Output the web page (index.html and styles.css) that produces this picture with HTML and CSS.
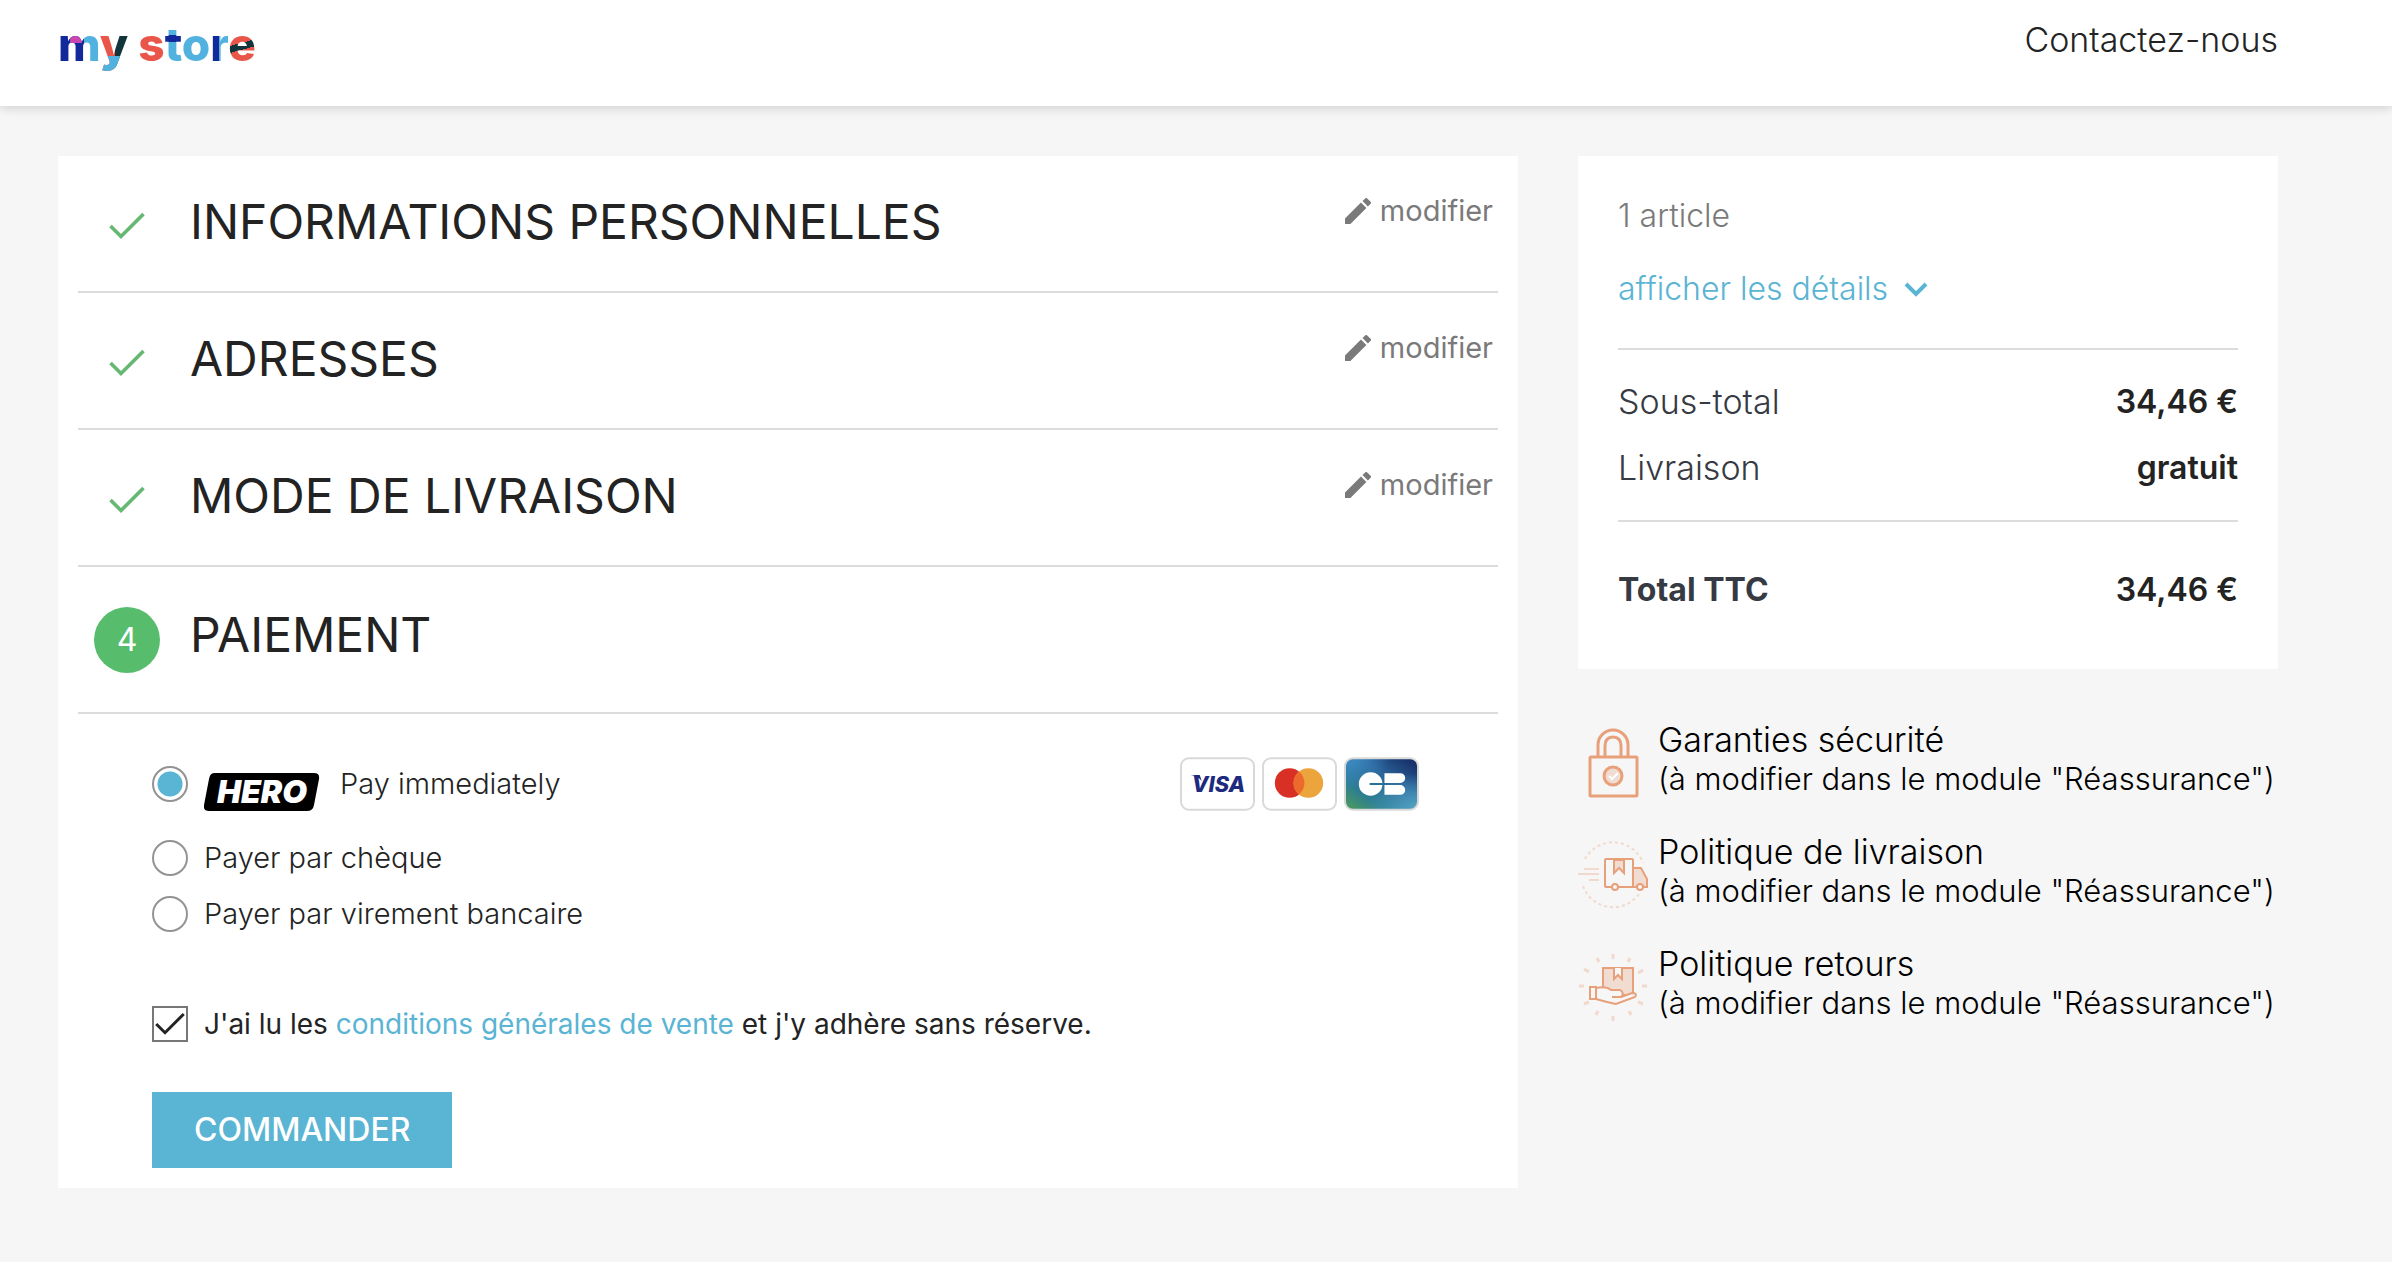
FILE: index.html
```html
<!DOCTYPE html>
<html lang="fr">
<head>
<meta charset="utf-8">
<meta name="viewport" content="width=device-width, initial-scale=1">
<title>Commande - my store</title>
<link rel="stylesheet" href="styles.css">
</head>
<body>
<svg class="sprite" aria-hidden="true">
  <symbol id="check" viewBox="0 0 36 28"><path d="M1.500 14 12 24.500 34.500 2" fill="none" stroke="currentColor" stroke-width="3.600"/></symbol>
  <symbol id="pencil" viewBox="3 3 18 18"><path d="M3 17.250V21h3.750L17.810 9.940l-3.750-3.750L3 17.250zM20.710 7.040a1 1 0 0 0 0-1.410l-2.340-2.340a1 1 0 0 0-1.410 0l-1.830 1.830 3.750 3.750 1.830-1.830z" fill="currentColor"/></symbol>
</svg>

<header class="header">
  <a class="logo" href="#" aria-label="my store"><span class="logo-m">m</span><span class="logo-y">y</span> <span class="logo-s">s</span><span class="logo-t">t</span><span class="logo-o">o</span><span class="logo-r">r</span><span class="logo-e">e</span></a>
  <a class="contact" href="#">Contactez-nous</a>
</header>

<main class="checkout">
  <div class="card steps">
    <section class="step">
      <span class="step-mark done"><svg width="36" height="28"><use href="#check"/></svg></span>
      <h1>INFORMATIONS PERSONNELLES</h1>
      <a class="edit" href="#"><svg width="26" height="26"><use href="#pencil"/></svg>modifier</a>
    </section>
    <section class="step">
      <span class="step-mark done"><svg width="36" height="28"><use href="#check"/></svg></span>
      <h1>ADRESSES</h1>
      <a class="edit" href="#"><svg width="26" height="26"><use href="#pencil"/></svg>modifier</a>
    </section>
    <section class="step">
      <span class="step-mark done"><svg width="36" height="28"><use href="#check"/></svg></span>
      <h1>MODE DE LIVRAISON</h1>
      <a class="edit" href="#"><svg width="26" height="26"><use href="#pencil"/></svg>modifier</a>
    </section>
    <section class="step current">
      <span class="step-mark number">4</span>
      <h1>PAIEMENT</h1>
    </section>

    <form class="payment">
      <div class="option featured">
        <input type="radio" name="payment" id="pay-hero" checked>
        <label for="pay-hero">
          <svg class="hero" width="116" height="38" viewBox="0 0 116 38" role="img" aria-label="Hero">
            <path d="M10 0H110Q116 0 115 6L110 32Q109 38 103 38H5Q-1 38 0 32L5 6Q6 0 10 0z"/>
            <text x="58" y="30" text-anchor="middle">HERO</text>
          </svg>
          Pay immediately
        </label>
        <div class="brands">
          <svg width="75" height="54" viewBox="0 0 76 54" role="img" aria-label="Visa">
            <rect class="brand-frame" x="1" y="1" width="74" height="52" rx="8"/>
            <path d="M11 18h9l2 6q-4-5-11-6z" fill="#1d2a80"/>
            <text class="visa" x="39" y="35" text-anchor="middle">VISA</text>
          </svg>
          <svg width="75" height="54" viewBox="0 0 76 54" role="img" aria-label="Mastercard">
            <rect class="brand-frame" x="1" y="1" width="74" height="52" rx="8"/>
            <circle cx="28" cy="26" r="15" fill="#d93025"/>
            <circle cx="47" cy="26" r="15" fill="#eca43c"/>
            <path d="M37.500 14.400a15 15 0 0 1 0 23.200 15 15 0 0 1 0-23.200z" fill="#ec6a2c"/>
          </svg>
          <svg width="75" height="54" viewBox="0 0 76 54" role="img" aria-label="Carte bancaire">
            <defs>
              <linearGradient id="cb-base" x1="0" y1="1" x2="1" y2="0"><stop offset="0" stop-color="#4f9d57"/><stop offset=".28" stop-color="#2c7d92"/><stop offset=".62" stop-color="#2a6298"/><stop offset="1" stop-color="#13255f"/></linearGradient>
              <radialGradient id="cb-left" cx="0" cy="0" r=".6"><stop offset="0" stop-color="#3f8fc9"/><stop offset="1" stop-color="#3f8fc9" stop-opacity="0"/></radialGradient>
              <radialGradient id="cb-right" cx="1" cy="1" r=".7"><stop offset="0" stop-color="#55a6c6"/><stop offset="1" stop-color="#55a6c6" stop-opacity="0"/></radialGradient>
            </defs>
            <rect x="1" y="1" width="74" height="52" rx="8" fill="url(#cb-base)"/>
            <rect x="1" y="1" width="74" height="52" rx="8" fill="url(#cb-left)"/>
            <rect class="brand-frame clear" x="1" y="1" width="74" height="52" rx="8"/>
            <circle cx="27" cy="27" r="12" fill="#fff"/>
            <path d="M26 27h14" stroke="#2a6f95" stroke-width="2"/>
            <path d="M41 16h16a5 5 0 0 1 0 10H41zM41 28h16a5 5 0 0 1 0 10H41z" fill="#fff"/>
          </svg>
        </div>
      </div>
      <div class="option">
        <input type="radio" name="payment" id="pay-cheque">
        <label for="pay-cheque">Payer par chèque</label>
      </div>
      <div class="option">
        <input type="radio" name="payment" id="pay-wire">
        <label for="pay-wire">Payer par virement bancaire</label>
      </div>
      <div class="terms">
        <span class="tick"><input type="checkbox" id="terms" checked><svg width="30" height="24"><use href="#check"/></svg></span>
        <label for="terms">J'ai lu les <a href="#">conditions générales de vente</a> et j'y adhère sans réserve.</label>
      </div>
      <button class="order" type="submit">COMMANDER</button>
    </form>
  </div>

  <aside class="sidebar">
    <section class="card summary">
      <p class="count">1 article</p>
      <a class="details" href="#">afficher les détails
        <svg width="24" height="16" viewBox="0 0 24 16"><path d="M2 3 12 13 22 3" fill="none" stroke="currentColor" stroke-width="4"/></svg>
      </a>
      <dl class="totals">
        <div><dt>Sous-total</dt><dd>34,46 €</dd></div>
        <div><dt>Livraison</dt><dd>gratuit</dd></div>
      </dl>
      <dl class="totals grand">
        <div><dt>Total TTC</dt><dd>34,46 €</dd></div>
      </dl>
    </section>

    <ul class="reassurance">
      <li>
        <svg width="70" height="70" viewBox="0 0 70 70" fill="none" stroke="#e8a07b" stroke-width="3">
          <rect x="12" y="29" width="47" height="39" rx="1"/>
          <path d="M20 28V17a15 15 0 0 1 30 0v11M27 28V18q0-9 8-9t8 9v10"/>
          <circle cx="35" cy="48" r="9" fill="#f1dcd1"/>
          <path d="m31 48 3 3 6-6" stroke="#fff" stroke-width="2"/>
        </svg>
        <div><h2>Garanties sécurité</h2><p>(à modifier dans le module "Réassurance")</p></div>
      </li>
      <li>
        <svg width="70" height="70" viewBox="0 0 70 70" fill="none" stroke="#e8a07b" stroke-width="2">
          <path d="M7 19a32 32 0 0 1 58 4M5 46a32 32 0 0 0 56 8" stroke="#f1d9cd" stroke-dasharray="3 3"/>
          <path d="M6 29h15M0 34h21M11 40h10" stroke="#f1d9cd"/>
          <path d="M55 28h8l6 11v8H55z" fill="#f1dcd1"/>
          <path d="M36 20v13l5-5 5 5V20z" fill="#f1dcd1"/>
          <rect x="27" y="19" width="28" height="28" rx="1"/>
          <circle cx="37" cy="47" r="3" fill="#f6f6f6"/><circle cx="62" cy="47" r="3" fill="#f6f6f6"/>
        </svg>
        <div><h2>Politique de livraison</h2><p>(à modifier dans le module "Réassurance")</p></div>
      </li>
      <li>
        <svg width="70" height="70" viewBox="0 0 70 70" fill="none" stroke="#e8a07b" stroke-width="2">
          <path d="M35 2v5M35 64v5M1 34h5M64 34h5M19 6l2 4M52 6l-2 4M6 17l5 3M65 18l-5 3M6 52l5-2M65 52l-5-2M18 63l2-4M53 63l-2-4" stroke="#f1d9cd" stroke-width="3"/>
          <path d="M25 16h30v27H25z" fill="#f1dcd1"/>
          <path d="M36 16v11l4-4 4 4V16" fill="#f6f6f6"/>
          <path d="M18 36q10-2 15 2h9q5 3 1 7l11-4q6 0 3 4L38 52q-10-2-20-5z" fill="#f6f6f6"/>
          <path d="M34 45h9"/><path d="M12 35h6v12h-6z"/>
        </svg>
        <div><h2>Politique retours</h2><p>(à modifier dans le module "Réassurance")</p></div>
      </li>
    </ul>
  </aside>
</main>
</body>
</html>
```
FILE: styles.css
```css
* { box-sizing: border-box; margin: 0; padding: 0; }

body {
  background: #fff;
  color: #232323;
  font-family: Inter, "Liberation Sans", sans-serif;
  font-size: 29px;
  font-weight: 300;
  line-height: 40px;
}

a { color: inherit; text-decoration: none; }
ul { list-style: none; }
svg { flex: none; }
.sprite { display: none; }

/* Header */
.header {
  position: relative;
  display: flex;
  justify-content: space-between;
  align-items: flex-start;
  height: 106px;
  padding: 20px 114px 0 58px;
  background: #fff;
  box-shadow: 0 2px 10px rgba(0, 0, 0, .16);
}
.logo { font-size: 46px; font-weight: 800; line-height: 48px; }
.logo span { color: transparent; -webkit-background-clip: text; background-clip: text; }
.logo .logo-m { background-image: linear-gradient(90deg, transparent 28%, #c846ae 28% 56%, transparent 56%), linear-gradient(90deg, #11299a 62%, #51b1df 62%); background-size: 100% 27px, 100% 100%; background-repeat: no-repeat; }
.logo .logo-y { background-image: linear-gradient(180deg, transparent 72%, #51b1df 72%), linear-gradient(90deg, #ea5549 55%, #12343b 55%); }
.logo .logo-s { background-image: linear-gradient(#ea5549, #ea5549); }
.logo .logo-t { background-image: linear-gradient(180deg, #51b1df 34%, #11299a 34% 46%, #51b1df 46%); }
.logo .logo-o { background-image: linear-gradient(#51b1df, #51b1df); }
.logo .logo-r { background-image: linear-gradient(90deg, #11299a 48%, #51b1df 48%); }
.logo .logo-e { background-image: linear-gradient(165deg, #ea5549 48%, #12343b 48% 59%, #ea5549 59%); }
.contact { font-size: 34px; }

/* Page grid */
.checkout {
  display: grid;
  grid-template-columns: 1460fr 700fr;
  gap: 60px;
  align-items: start;
  padding: 50px 114px 74px 58px;
  background: #f6f6f6;
}
.card { background: #fff; }

/* Steps */
.steps { padding: 0 20px 20px; }
.step {
  display: flex;
  align-items: center;
  gap: 30px;
  min-height: 137px;
  padding: 0 5px 4px 16px;
  border-bottom: 2px solid #dcdcdc;
}
.step.current { min-height: 147px; padding-bottom: 9px; }
.step h1 { flex: 1; font-size: 48px; font-weight: 400; line-height: 60px; }
.step-mark {
  display: flex;
  align-items: center;
  justify-content: center;
  width: 66px;
  height: 66px;
  margin-top: 9px;
}
.done { color: #64b871; }
.number { border-radius: 50%; background: #57bd6d; color: #fff; font-size: 32px; font-weight: 400; }
.edit {
  display: flex;
  align-items: center;
  gap: 9px;
  align-self: flex-start;
  margin-top: 35px;
  color: #7a7a7a;
  font-weight: 400;
}

/* Payment */
.payment { padding: 24px 79px 0 74px; }
.option { display: flex; align-items: center; gap: 16px; min-height: 56px; }
.option.featured { min-height: 92px; }
.option label { display: flex; align-items: center; gap: 20px; }
.option input {
  appearance: none;
  flex: none;
  width: 36px;
  height: 36px;
  border: 2px solid #939393;
  border-radius: 50%;
  background: #fff;
}
.option input:checked { background: radial-gradient(circle, #5ab4d3 12px, #fff 13px); }
.hero { margin-top: 16px; }
.hero text { fill: #fff; font-size: 32px; font-style: italic; font-weight: 900; }
.brands { display: flex; gap: 7px; margin-left: auto; }
.brand-frame { fill: #fff; stroke: #d9d9d9; stroke-width: 2px; }
.brand-frame.clear { fill: url(#cb-right); }
.visa { fill: #1d2a80; font-size: 22px; font-style: italic; font-weight: 800; }

.terms { display: flex; align-items: center; gap: 16px; margin-top: 62px; font-size: 28px; font-weight: 400; }
.terms a { color: #5ab4d3; }
.tick { display: grid; place-items: center; }
.tick > * { grid-area: 1 / 1; }
.tick svg { pointer-events: none; }
.terms input {
  appearance: none;
  width: 36px;
  height: 36px;
  border: 2px solid #777;
}
.order {
  display: block;
  margin-top: 48px;
  padding: 18px 42px;
  border: 0;
  background: #5ab4d3;
  color: #fff;
  font: 500 32px/40px Inter, "Liberation Sans", sans-serif;
}

/* Summary */
.summary { padding: 40px 40px 46px; font-size: 32px; }
.count { color: #7a7a7a; }
.details {
  display: flex;
  align-items: center;
  gap: 16px;
  margin: 33px 0 39px;
  color: #5ab4d3;
}
.totals { padding: 19px 0; border-top: 2px solid #dcdcdc; }
.totals.grand { padding: 35px 0 0; }
.totals div { display: flex; justify-content: space-between; line-height: 66px; }
.totals dt { color: #363a42; font-size: 34px; }
.totals dd { font-weight: 600; }
.totals.grand dt { font-size: 32px; font-weight: 700; }

/* Reassurance */
.reassurance { display: grid; gap: 34px; margin-top: 51px; }
.reassurance li { display: flex; gap: 10px; color: #000; font-size: 31px; line-height: 39px; }
.reassurance svg { margin-top: 8px; }
.reassurance h2 { font-size: 34px; font-weight: 300; }
```
